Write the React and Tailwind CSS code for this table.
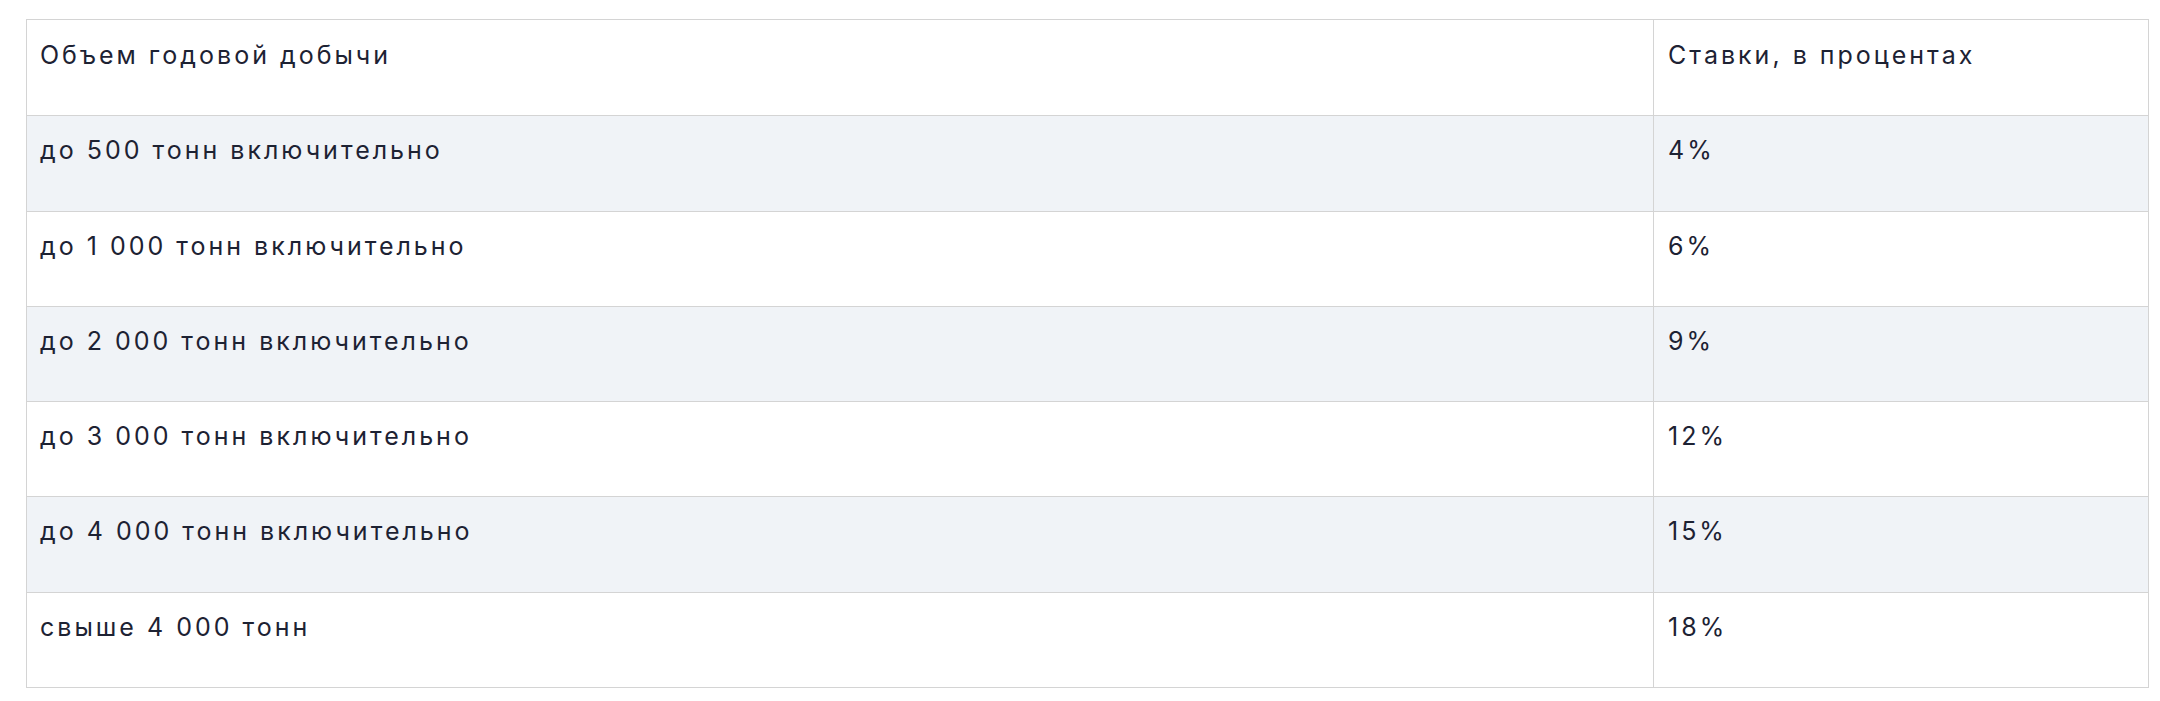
export default function App() {
  const rows = [
    ["до 500 тонн включительно", "4%"],
    ["до 1 000 тонн включительно", "6%"],
    ["до 2 000 тонн включительно", "9%"],
    ["до 3 000 тонн включительно", "12%"],
    ["до 4 000 тонн включительно", "15%"],
    ["свыше 4 000 тонн", "18%"],
  ];
  return (
    <div className="w-[2160px] h-[701px] bg-white pt-[19px] pl-[26px]" style={{ fontFamily: "Inter, 'Noto Sans', sans-serif" }}>
      <div className="w-[2123px] border border-[#d4d4d4] text-[25px] leading-[32px] tracking-[3px] text-[#1d2233]">
        <div className="grid grid-cols-[1627px_1fr] h-[95.3px]">
          <div className="pl-[13px] pt-[19px] border-r border-[#d4d4d4]">Объем годовой добычи</div>
          <div className="pl-[14px] pt-[19px]">Ставки, в процентах</div>
        </div>
        {rows.map(([a, b], i) => (
          <div
            key={i}
            className={`grid grid-cols-[1627px_1fr] h-[95.3px] border-t border-[#d4d4d4] ${i % 2 === 0 ? "bg-[#f0f3f7]" : "bg-white"}`}
          >
            <div className="pl-[13px] pt-[18px] border-r border-[#d4d4d4]">{a}</div>
            <div className="pl-[14px] pt-[18px]">{b}</div>
          </div>
        ))}
      </div>
    </div>
  );
}
